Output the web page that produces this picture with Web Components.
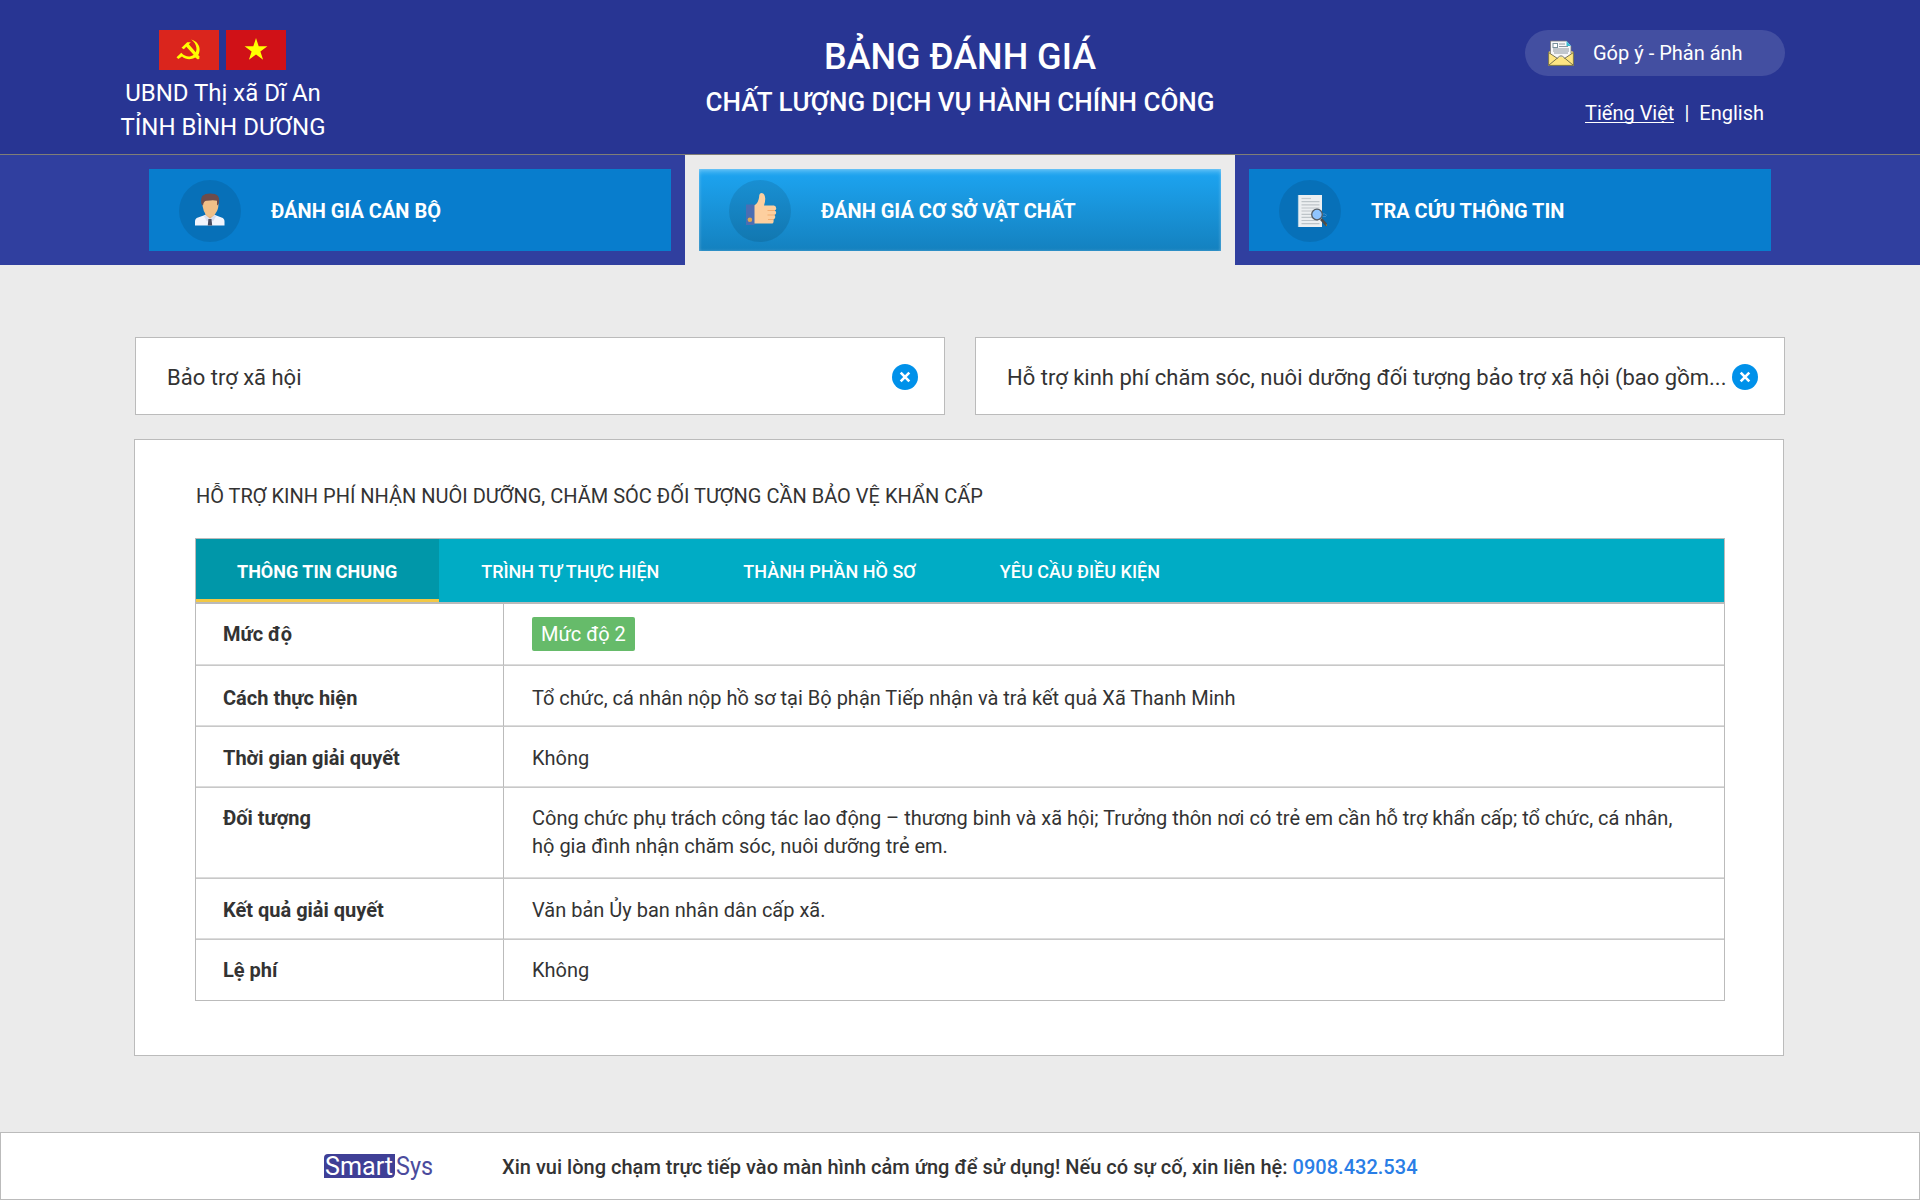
<!DOCTYPE html>
<html lang="vi">
<head>
<meta charset="utf-8">
<title>Bảng đánh giá</title>
<style>
html,body{margin:0;padding:0}
body{width:1920px;height:1200px;overflow:hidden;background:#ebebeb;font-family:Roboto,"Liberation Sans",sans-serif;color:#333}
</style>
</head>
<body>
<kiosk-page></kiosk-page>
<script>
const define = (name, html) => customElements.define(name, class extends HTMLElement {
  constructor() {
    super();
    const t = document.createElement('template');
    t.innerHTML = html;
    this.attachShadow({mode: 'open'}).appendChild(t.content.cloneNode(true));
  }
});

define('party-flag', `<style>:host{display:block;width:60px;height:40px;background:#da251d}svg{display:block}</style>
<svg width="60" height="40" viewBox="0 0 60 40">
<path d="M32.2 9.4C37.8 11 41 15.400 40.600 20.200C40.300 23.200 39.400 25 38.200 26.200L40.700 28.200L39 29.500L36.200 27.500C32 30.100 26.600 29.700 23 26.500L19.300 29L17.500 27.200L22.300 22.700C25 25.700 28.500 27.100 31.500 26.300C36 25 37.900 21.500 37.400 17.800C36.900 14.100 35 11.400 32.200 9.400Z" fill="#ff0"/>
<path d="M22.500 17.800L28.200 12.200L31.800 12.300L29.800 14.300L40.900 26.900L38.600 29L27.300 16.700L24.800 19.300Z" fill="#ff0"/></svg>`);

define('star-flag', `<style>:host{display:block;width:60px;height:40px;background:#d01117}svg{display:block}</style>
<svg width="60" height="40" viewBox="0 0 60 40"><path d="M30 8L32.700 16.300H41.400L34.400 21.400L37.100 29.700L30 24.600L22.900 29.700L25.600 21.400L18.600 16.300H27.300Z" fill="#ff0"/></svg>`);

define('unit-name', `<style>:host{display:flex;flex-direction:column;align-items:center;width:268px;margin-left:89px;padding-top:30px;font-size:24px;line-height:34px;color:#fff}
.flags{display:flex;gap:7px;margin:0 1px 6px 0}</style>
<div class="flags"><party-flag></party-flag><star-flag></star-flag></div><slot></slot>`);

define('page-title', `<style>:host{display:flex;flex-direction:column;align-items:center;padding-top:34px;color:#fff;font-weight:500;white-space:nowrap}
.a{font-size:36px;line-height:46px}.b{font-size:26px;line-height:34px;margin-top:5px}</style>
<div class="a"><slot name="main"></slot></div><div class="b"><slot name="sub"></slot></div>`);

define('feedback-button', `<style>:host{display:flex;align-items:center;box-sizing:border-box;width:260px;height:46px;padding-left:23px;border-radius:23px;background:rgba(255,255,255,.13);color:#fff;font-size:20px;line-height:46px}
svg{display:block;margin-right:19px}</style>
<svg width="26" height="26" viewBox="0 0 26 26">
<path d="M.5 12L13 6L25.500 12V25.500H.5Z" fill="#fde582"/>
<path d="M2.500 1H18.500L23 6V15.500L13 22L2.500 15.500Z" fill="#f7f7f9"/>
<path d="M18.500 1V6H23Z" fill="#39bcd3"/><path d="M2.500 13.500V1H18.500M23 6V13.500" fill="none" stroke="#777" stroke-width=".8"/>
<rect x="5" y="3.500" width="4.500" height="4" fill="#fff" stroke="#78909c"/>
<path d="M11 4H17M11 6.500H20M5 9H21M5 11H21M6 13H20" stroke="#8d979f" stroke-width="1"/>
<path d="M.5 12.500L9.500 18.500Q13 15 16.500 18.500L25.500 12.500V25.500H.5Z" fill="#fde582"/>
<path d="M.6 12.200V25.400H25.400V12.200M.6 12.500L9.500 18.500M25.400 12.500L16.500 18.500M1 25L11.500 16.300Q13 15.400 14.500 16.300L25 25" fill="none" stroke="#6a6745" stroke-width=".9"/></svg>
<slot></slot>`);

define('language-switch', `<style>:host{display:flex;justify-content:flex-end;margin-top:22px;margin-right:21px;font-size:20px;line-height:30px;color:#fff;white-space:pre}
u{text-decoration:none;box-shadow:inset 0 -1px #fff;height:25px}i{font-style:normal;margin:0 10px}</style>
<u>Tiếng Việt</u><i>|</i><span>English</span>`);

define('top-header', `<style>:host{display:grid;grid-template-columns:420px 1fr 420px;height:154px;background:#283593;border-bottom:1px solid #807e76}
.r{display:flex;flex-direction:column;width:260px;margin-left:25px;padding-top:30px}</style>
<unit-name><div>UBND Thị xã Dĩ An</div><div>TỈNH BÌNH DƯƠNG</div></unit-name>
<page-title><span slot="main">BẢNG ĐÁNH GIÁ</span><span slot="sub">CHẤT LƯỢNG DỊCH VỤ HÀNH CHÍNH CÔNG</span></page-title>
<div class="r"><feedback-button>Góp ý - Phản ánh</feedback-button><language-switch></language-switch></div>`);

define('nav-item', `<style>:host{display:block;box-sizing:border-box;width:550px;height:110px;padding:14px}
:host([active]){background:#ebebeb}
.b{display:flex;align-items:center;box-sizing:border-box;height:82px;padding:2px 0 0 30px;background:#087dcd;color:#fff;font-size:20px;font-weight:700}
:host([active]) .b{background:linear-gradient(#1da5f2,#1481bf);box-shadow:inset 0 4px 5px -1px rgba(255,255,255,.27),inset 0 0 3px rgba(255,255,255,.3)}
.c{display:flex;align-items:center;justify-content:center;width:62px;height:62px;margin-right:30px;border-radius:50%;background:rgba(0,0,0,.1)}</style>
<div class="b"><div class="c"><slot name="icon"></slot></div><span><slot></slot></span></div>`);

define('officer-icon', `<style>:host{display:block;margin-bottom:4px}svg{display:block}</style>
<svg width="32" height="34" viewBox="0 0 32 34">
<path d="M11.500 21H20.500V26L16 29L11.500 26Z" fill="#e3ae76"/>
<path d="M1 33.500V29.500Q1 26.500 4 25.600L11 23L16 27L21 23L27.500 25.600Q30.500 26.500 30.500 29.500V33.500Z" fill="#f2f4fc"/>
<path d="M11.300 22.500L16 27L13 29.500L9.800 24ZM20.600 22.500L16 27L19 29.500L22.200 24Z" fill="#d8dff0"/>
<path d="M14.400 27H17.500L18.200 33.500H13.800Z" fill="#4a4c60"/>
<path d="M8.500 9L10 7H22L24.200 9Q25 15 23 19Q20 24.800 16.300 24.800Q12.500 24.800 9.800 19Q8 14 8.500 9Z" fill="#f0c088"/>
<path d="M7.300 12Q6.500 6 8.500 3.700Q11 1.600 16 1.600Q21.500 1.600 23.700 3.700Q26 6 24.700 12L23 13.500V8.800Q20 7.600 13 8.700Q9.500 8.500 9 13.500Z" fill="#6d4c4b"/></svg>`);

define('thumb-icon', `<style>:host{display:block;margin:0 0 4px 1px}svg{display:block}</style>
<svg width="32" height="34" viewBox="0 0 32 34">
<path d="M8 13.500C12 13 14 8.500 14.300 3Q14.600 1 16.800 1Q19.600 1.500 20.200 6Q20.400 10 19 13.500H29Q31.500 14 31.200 17Q30.800 18.300 29.500 18.500Q31.600 19 31 21.500Q30.600 22.800 29 23Q30.800 23.500 30 26Q29.500 27.300 28 27.500Q29 28 28.500 30Q28.300 31.500 27 31.500H8Z" fill="#fdcf9f"/>
<path d="M22.500 18.500H30M22.500 23H29.500M23 27.500H28.500" stroke="#f1ad72" stroke-width="1.200"/>
<rect x="1" y="12.500" width="8.500" height="20.500" fill="#4b6eb3"/><circle cx="4.900" cy="27.700" r="2.300" fill="#dfa650"/></svg>`);

define('search-doc-icon', `<style>:host{display:block;margin-left:1px}svg{display:block}</style>
<svg width="32" height="34" viewBox="0 0 32 34">
<path d="M3 1H27V33H3Z" fill="#eceff1"/><path d="M3.400 1V33" stroke="#a9cce1"/>
<path d="M6.500 4.500H16" stroke="#c5cbce" stroke-width="1.200"/>
<path d="M6.500 7.700H24.500M6.500 10.800H24.500M6.500 14H24.500M6.500 17H21M6.500 20.300H16M6.500 23.400H17M6.500 26.500H23M6.500 29.600H24.500" stroke="#bdc4c8" stroke-width="1.200"/>
<path d="M26 20Q30 19 32 21.500M26.500 22Q29 23 31 22.500" fill="none" stroke="#4b96cf" stroke-width=".8"/>
<path d="M26 25L32 31.500" stroke="#4b4c4c" stroke-width="2.600"/><path d="M31 30.500L32.500 32" stroke="#9a792d" stroke-width="1.200"/>
<circle cx="22" cy="20.500" r="5.300" fill="#90c5ff" stroke="#555b61" stroke-width="1.300"/></svg>`);

define('main-nav', `<style>:host{display:flex;height:110px;padding-left:135px;background:#303f9f}</style>
<nav-item><officer-icon slot="icon"></officer-icon>ĐÁNH GIÁ CÁN BỘ</nav-item>
<nav-item active><thumb-icon slot="icon"></thumb-icon>ĐÁNH GIÁ CƠ SỞ VẬT CHẤT</nav-item>
<nav-item><search-doc-icon slot="icon"></search-doc-icon>TRA CỨU THÔNG TIN</nav-item>`);

define('filter-box', `<style>:host{display:flex;align-items:center;justify-content:space-between;box-sizing:border-box;width:810px;height:78px;padding:2px 26px 0 31px;border:1px solid #bbb;background:#fff;font-size:22px;line-height:28px;white-space:nowrap}
.t{padding-top:1px}svg{display:block;flex:none}</style>
<div class="t"><slot></slot></div>
<svg width="26" height="26" viewBox="0 0 26 26"><circle cx="13" cy="13" r="13" fill="#0091ea"/><path d="M8.700 8.700L17.300 17.300M17.300 8.700L8.700 17.300" stroke="#fff" stroke-width="2.600"/></svg>`);

define('tab-label', `<style>:host{display:block;box-sizing:border-box;height:63px;padding:0 42px;font-size:18px;font-weight:500;line-height:66px;color:#fff;white-space:nowrap}
:host([active]){padding-left:41px;background:#0097a9;box-shadow:inset 0 -3px #f2c844;font-weight:700}</style><slot></slot>`);

define('tab-bar', `<style>:host{display:flex;height:63px;background:#00acc5;border-bottom:2px solid #bababa}</style><slot></slot>`);

define('info-row', `<style>:host{display:grid;grid-template-columns:308px 1fr;box-sizing:border-box;height:var(--h,61px);border-bottom:1px solid #c8c8c8;box-shadow:inset 0 -1px #dcdcdc;font-size:20px;line-height:28px}
:host([last]){border-bottom-color:#bbb;box-shadow:none}
.l,.v{padding:var(--p,17px) 28px 0 27px}.l{font-weight:700;border-right:1px solid #bbb}.v{padding-left:28px}</style>
<div class="l"><slot name="label"></slot></div><div class="v"><slot></slot></div>`);

define('level-badge', `<style>:host{display:block;width:max-content;margin-top:-3px;padding:3px 9px;border-radius:2px;background:#66bb6a;color:#fff}</style><slot></slot>`);

define('detail-panel', `<style>:host{display:block;box-sizing:border-box;width:1650px;height:617px;margin:24px 0 0 134px;padding:41px 58px 0 60px;border:1px solid #bbb;background:#fff}
h1{margin:0 0 27px 1px;font-size:20px;line-height:30px;font-weight:400;white-space:nowrap}
.table{border:1px solid #bbb;border-bottom:0}</style>
<h1>HỖ TRỢ KINH PHÍ NHẬN NUÔI DƯỠNG, CHĂM SÓC ĐỐI TƯỢNG CẦN BẢO VỆ KHẨN CẤP</h1>
<div class="table">
<tab-bar><tab-label active>THÔNG TIN CHUNG</tab-label><tab-label>TRÌNH TỰ THỰC HIỆN</tab-label><tab-label>THÀNH PHẦN HỒ SƠ</tab-label><tab-label>YÊU CẦU ĐIỀU KIỆN</tab-label></tab-bar>
<info-row style="--h:62px;--p:16px"><span slot="label">Mức độ</span><level-badge>Mức độ 2</level-badge></info-row>
<info-row style="--p:18px"><span slot="label">Cách thực hiện</span>Tổ chức, cá nhân nộp hồ sơ tại Bộ phận Tiếp nhận và trả kết quả Xã Thanh Minh</info-row>
<info-row><span slot="label">Thời gian giải quyết</span>Không</info-row>
<info-row style="--h:91px;--p:16px"><span slot="label">Đối tượng</span>Công chức phụ trách công tác lao động – thương binh và xã hội; Trưởng thôn nơi có trẻ em cần hỗ trợ khẩn cấp; tổ chức, cá nhân, hộ gia đình nhận chăm sóc, nuôi dưỡng trẻ em.</info-row>
<info-row><span slot="label">Kết quả giải quyết</span>Văn bản Ủy ban nhân dân cấp xã.</info-row>
<info-row last style="--p:16px"><span slot="label">Lệ phí</span>Không</info-row>
</div>`);

define('smart-logo', `<style>:host{display:flex;align-items:flex-start;width:178px;white-space:normal}
svg{display:block;flex:none;margin-top:-8px;font-family:Roboto,sans-serif;font-weight:400}</style>
<svg width="120" height="44" viewBox="0 -8 120 44"><path d="M4 0H71V19Q71 24 66 24H0V4Q0 0 4 0Z" fill="#3f3f96"/>
<text x="1" y="20.500" font-size="25" fill="#fff" textLength="68" lengthAdjust="spacingAndGlyphs">Smart</text>
<text x="72" y="20.500" font-size="25" fill="#4b4b9d" textLength="37" lengthAdjust="spacingAndGlyphs">Sys</text></svg>`);

define('page-footer', `<style>:host{display:flex;box-sizing:border-box;height:68px;margin-top:76px;padding:21px 0 0 323px;border:1px solid #bbb;background:#fff;font-size:20px;font-weight:500;line-height:28px;white-space:pre}
div{margin-top:-1px;letter-spacing:.016px}b{font-weight:500;color:#2a7ee6}</style>
<smart-logo></smart-logo><div>Xin vui lòng chạm trực tiếp vào màn hình cảm ứng để sử dụng! Nếu có sự cố, xin liên hệ: <b>0908.432.534</b></div>`);

define('kiosk-page', `<style>:host{display:flex;flex-direction:column;height:1200px}
.filters{display:flex;gap:30px;margin:72px 0 0 135px}</style>
<top-header></top-header><main-nav></main-nav>
<div class="filters"><filter-box>Bảo trợ xã hội</filter-box><filter-box>Hỗ trợ kinh phí chăm sóc, nuôi dưỡng đối tượng bảo trợ xã hội (bao gồm...</filter-box></div>
<detail-panel></detail-panel><page-footer></page-footer>`);
</script>
</body>
</html>
